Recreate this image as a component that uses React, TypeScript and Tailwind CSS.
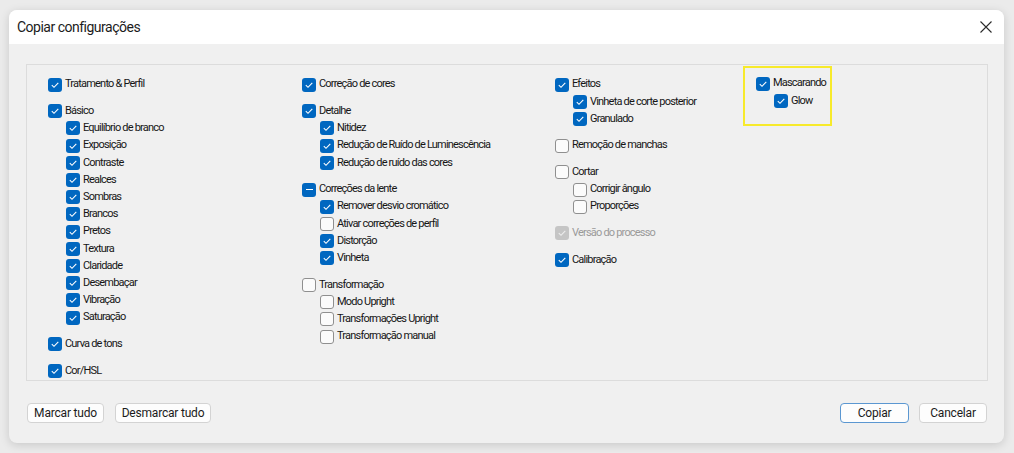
import React from "react";

type State = "on" | "off" | "mixed" | "disabled";

type Item = {
  label: string;
  state: State;
  children?: { label: string; state: State }[];
};

const columns: Item[][] = [
  [
    { label: "Tratamento & Perfil", state: "on" },
    {
      label: "Básico",
      state: "on",
      children: [
        { label: "Equilíbrio de branco", state: "on" },
        { label: "Exposição", state: "on" },
        { label: "Contraste", state: "on" },
        { label: "Realces", state: "on" },
        { label: "Sombras", state: "on" },
        { label: "Brancos", state: "on" },
        { label: "Pretos", state: "on" },
        { label: "Textura", state: "on" },
        { label: "Claridade", state: "on" },
        { label: "Desembaçar", state: "on" },
        { label: "Vibração", state: "on" },
        { label: "Saturação", state: "on" },
      ],
    },
    { label: "Curva de tons", state: "on" },
    { label: "Cor/HSL", state: "on" },
  ],
  [
    { label: "Correção de cores", state: "on" },
    {
      label: "Detalhe",
      state: "on",
      children: [
        { label: "Nitidez", state: "on" },
        { label: "Redução de Ruído de Luminescência", state: "on" },
        { label: "Redução de ruído das cores", state: "on" },
      ],
    },
    {
      label: "Correções da lente",
      state: "mixed",
      children: [
        { label: "Remover desvio cromático", state: "on" },
        { label: "Ativar correções de perfil", state: "off" },
        { label: "Distorção", state: "on" },
        { label: "Vinheta", state: "on" },
      ],
    },
    {
      label: "Transformação",
      state: "off",
      children: [
        { label: "Modo Upright", state: "off" },
        { label: "Transformações Upright", state: "off" },
        { label: "Transformação manual", state: "off" },
      ],
    },
  ],
  [
    {
      label: "Efeitos",
      state: "on",
      children: [
        { label: "Vinheta de corte posterior", state: "on" },
        { label: "Granulado", state: "on" },
      ],
    },
    { label: "Remoção de manchas", state: "off" },
    {
      label: "Cortar",
      state: "off",
      children: [
        { label: "Corrigir ângulo", state: "off" },
        { label: "Proporções", state: "off" },
      ],
    },
    { label: "Versão do processo", state: "disabled" },
    { label: "Calibração", state: "on" },
  ],
];

const Box = ({ state }: { state: State }) => {
  if (state === "off") {
    return <span className="w-[14px] h-[14px] shrink-0 rounded-[3px] border border-[#8f8f8f] bg-[#fbfbfb]" />;
  }
  if (state === "mixed") {
    return (
      <span className="w-[14px] h-[14px] shrink-0 rounded-[3px] bg-[#0067c0] flex items-center justify-center">
        <span className="w-[7px] h-[1.5px] bg-white" />
      </span>
    );
  }
  const bg = state === "disabled" ? "bg-[#c5c5c5]" : "bg-[#0067c0]";
  return (
    <span className={`w-[14px] h-[14px] shrink-0 rounded-[3px] ${bg} flex items-center justify-center`}>
      <svg width="10" height="10" viewBox="0 0 10 10" fill="none">
        <path d="M1.8 5.2 L4 7.3 L8.3 2.8" stroke={state === "disabled" ? "#eeeeee" : "#ffffff"} strokeWidth="1.1" />
      </svg>
    </span>
  );
};

const Row = ({ label, state, sub }: { label: string; state: State; sub?: boolean }) => (
  <div className={`h-[17.2px] flex items-center gap-[3px] ${sub ? "pl-[18px]" : ""}`}>
    <Box state={state} />
    <span className={`whitespace-nowrap ${state === "disabled" ? "text-[#9a9a9a]" : "text-[#161616]"}`}>{label}</span>
  </div>
);

const Group = ({ item }: { item: Item }) => (
  <div className="flex flex-col">
    <Row label={item.label} state={item.state} />
    {item.children?.map((c) => (
      <Row key={c.label} label={c.label} state={c.state} sub />
    ))}
  </div>
);

const widths = ["w-[254px]", "w-[253px]", "w-[188px]"];

const Button = ({ title, width, primary }: { title: string; width: string; primary?: boolean }) => (
  <button
    className={`${width} h-[20px] rounded-[4px] bg-[#fdfdfd] text-[12px] tracking-[-0.2px] text-[#1b1b1b] border ${
      primary ? "border-[#5b97d1]" : "border-[#d3d3d3]"
    }`}
  >
    {title}
  </button>
);

export default function App() {
  return (
    <div
      className="w-[1014px] h-[453px] bg-[#ebebeb] pl-[9px] pt-[10px] overflow-hidden"
      style={{ fontFamily: "Roboto, 'Noto Sans', sans-serif" }}
    >
      <div className="w-[995px] h-[433px] bg-[#f0f0f0] rounded-[8px] shadow-[0_2px_10px_rgba(0,0,0,0.15)] overflow-hidden flex flex-col">
        <div className="h-[34px] bg-white flex items-center justify-between pl-[8px] pr-[12px]">
          <span className="text-[14px] tracking-[-0.5px] text-[#1b1b1b]">Copiar configurações</span>
          <svg width="12" height="12" viewBox="0 0 12 12">
            <path d="M0.5 0.5 L11.5 11.5 M11.5 0.5 L0.5 11.5" stroke="#2b2b2b" strokeWidth="1.1" />
          </svg>
        </div>
        <div className="pl-[17px] pt-[20px]">
          <div className="w-[962px] h-[317px] border border-[#dcdcdc] bg-[#f0f0f0] pl-[21px] pt-[11px] flex text-[11px] tracking-[-0.8px]">
            {columns.map((col, i) => (
              <div key={i} className={`${widths[i]} flex flex-col gap-[9.5px]`}>
                {col.map((item) => (
                  <Group key={item.label} item={item} />
                ))}
              </div>
            ))}
            <div className="-mt-[10px] w-[89px] h-[60px] border-2 border-[#f7ea2b] pl-[11px] pt-[7px] self-start">
              <Group
                item={{ label: "Mascarando", state: "on", children: [{ label: "Glow", state: "on" }] }}
              />
            </div>
          </div>
          <div className="flex items-center mt-[22px] pr-[16px]">
            <div className="flex gap-[11px] ml-[1px]">
              <Button title="Marcar tudo" width="w-[77px]" />
              <Button title="Desmarcar tudo" width="w-[96px]" />
            </div>
            <div className="ml-auto flex gap-[10px] mr-[1px]">
              <Button title="Copiar" width="w-[69px]" primary />
              <Button title="Cancelar" width="w-[68px]" />
            </div>
          </div>
        </div>
      </div>
    </div>
  );
}
